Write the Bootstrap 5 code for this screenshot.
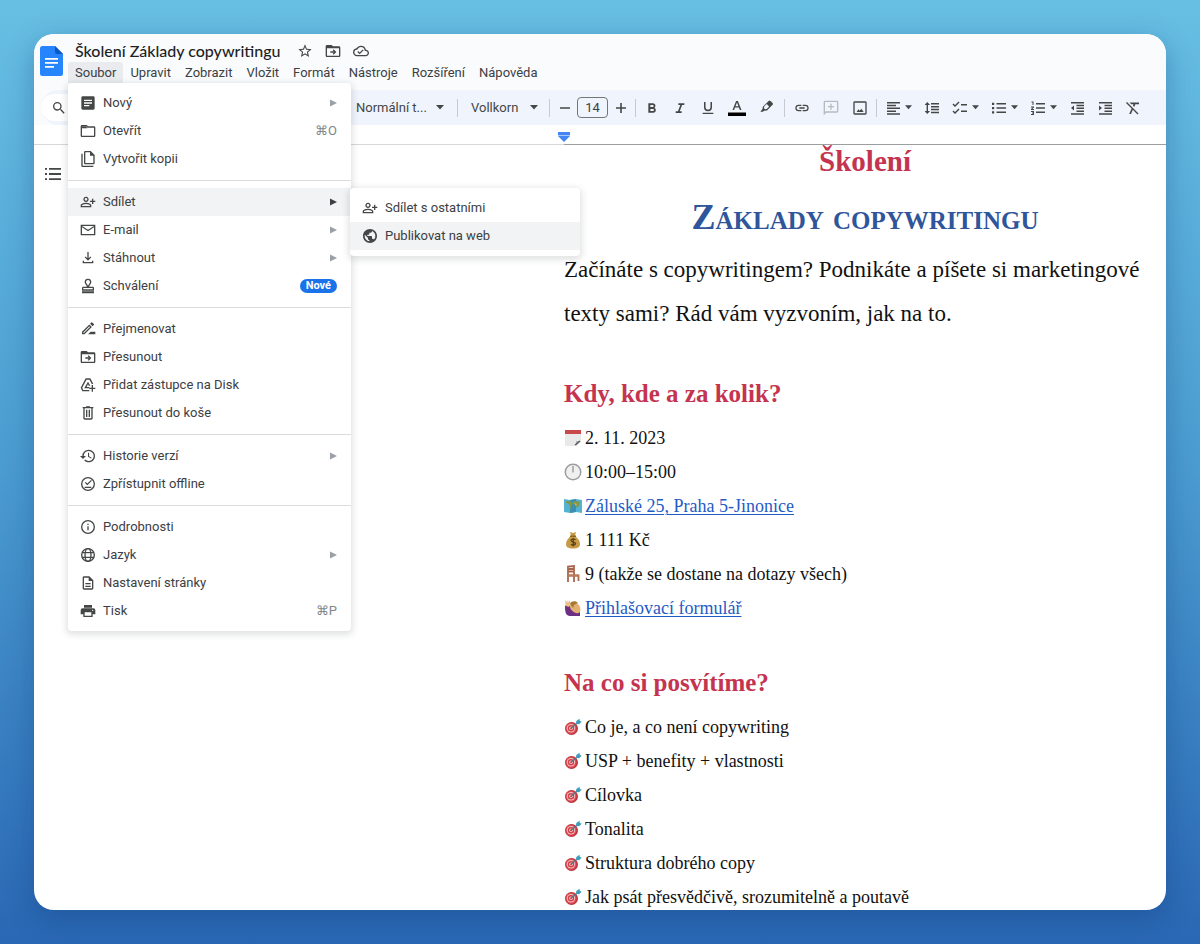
<!DOCTYPE html>
<html lang="cs">
<head>
<meta charset="utf-8">
<meta name="viewport" content="width=device-width, initial-scale=1">
<title>Školení Základy copywritingu</title>
<link rel="stylesheet" href="https://cdn.jsdelivr.net/npm/bootstrap@5.3.0/dist/css/bootstrap.min.css">
<style>
  body { font-family: Roboto, "Liberation Sans", sans-serif; font-size: 13px; color: #3c4043; background: linear-gradient(180deg, #67bfe3 0%, #4a9bd0 50%, #2a67b4 100%); }
  .stage { padding: 34px; }
  .app-window { background: #fff; border-radius: 20px; box-shadow: 0 8px 28px rgba(10, 50, 110, .32); }
  .app-head { background: #f9fbfd; padding: 6px 6px 0 6px; height: 49px; }
  .doc-logo { width: 24px; height: 32px; margin-top: 5px; }
  .doc-title { font-family: Lato, Roboto, sans-serif; font-size: 16px; line-height: 22px; color: #1f1f1f; margin: 0 0 0 7px; }
  .title-row { gap: 12px; }
  .menu-btn { font-size: 13px; line-height: 21px; padding: 0 7px; border: 0; background: none; color: #3c4043; }
  .menu-btn.show { background: #e9ebee; border-radius: 3px 3px 0 0; }
  svg { display: block; fill: #444746; flex: none; }
  .ic { width: 16px; height: 16px; }

  .file-menu, .sub-menu { --bs-dropdown-item-padding-y: 0; border: 0; border-radius: 4px; padding: 6px 0; font-size: 13px; box-shadow: 0 2px 6px 2px rgba(60, 64, 67, .15); }
  .file-menu { width: 283px; top: 100%; left: 0; }
  .file-menu .dropdown-item { height: 28px; line-height: 28px; padding: 0 14px 0 12px; color: #3c4043; gap: 7px; }
  .file-menu .dropdown-item.hot { background: #f1f3f4; }
  .file-menu .dropdown-divider { margin: 7px 0; border-color: #dadce0; opacity: 1; }
  .sub-menu { width: 230px; top: 0; left: 282px; }
  .key { color: #80868b; }
  .arr { width: 7px; height: 8px; fill: #9aa0a6; }
  .hot .arr { fill: #3c4043; }
  .new-pill { font-size: 11px; line-height: 14px; padding: 0 6px; background: #1a73e8; }

  .tool-wrap { background: #f9fbfd; padding: 7px 0 0 7px; }
  .toolbar { background: #f0f4fc; height: 35px; border-radius: 18px 0 0 18px; }
  .search-pill { width: 311px; height: 27px; padding-left: 10px; border: 0; border-radius: 14px 0 0 14px; background: linear-gradient(90deg, #fff 40px, #f0f4fc 40px); }
  .tb { border: 0; background: none; width: 28px; height: 28px; padding: 0; display: flex; align-items: center; justify-content: center; color: #444746; flex: none; font-size: 13px; }
  .tb-29 { width: 29px; }
  .tb-30 { width: 30px; }
  .tb-25 { width: 25px; }
  .tb-split { width: 39px; gap: 4px; }
  .tb-style { width: 103px; justify-content: start; padding-left: 4px; }
  .tb-font { width: 87px; justify-content: start; padding-left: 11px; }
  .tb-style span { width: 80px; text-align: left; }
  .tb-font span { width: 59px; text-align: left; }
  .caret { width: 8px; height: 5px; }
  .tb-split .caret { width: 7px; }
  .muted-ic { fill: #b8bbbe; }
  .vr-line { width: 1px; height: 18px; margin: 0 2px; background: #c7cbd1; flex: none; }
  .size-box { width: 31px; height: 21px; border: 1px solid #747775; border-radius: 4px; background: none; text-align: center; font-size: 13px; padding: 0; color: #3c4043; }

  .ruler { height: 20px; display: flex; }
  .side-part { flex: 0 1 530px; }
  .page-part { flex: 1 1 0; min-width: 0; }
  .ruler .side-part { border-bottom: 1px solid #d5d7da; }
  .ruler .page-part { border-bottom: 1px solid #9c9fa2; }
  .indent-mark { width: 12px; height: 10px; margin: 7px 0 0 -6px; }
  .outline-btn { border: 0; background: none; padding: 0; margin: 21px 0 0 10px; }

  .paper { font-family: "Liberation Serif", serif; color: #111; }
  .paper h1, .paper h2 { color: #c5344f; font-weight: 700; margin: 0; }
  .paper h1 { font-size: 29px; line-height: 32px; }
  .paper .caps { color: #2f559a; font-size: 36px; line-height: 44px; margin-top: 18px; font-variant: small-caps; font-weight: 700; }
  .paper .intro { font-size: 23px; line-height: 44px; margin: 9px 0 0; }
  .paper h2 { font-size: 25px; line-height: 36px; margin: 40px 0 9px; }
  .paper li { font-size: 18px; line-height: 34px; height: 34px; gap: 3px; display: flex; align-items: center; white-space: nowrap; }
  .paper a { color: #1f5bc4; text-decoration-thickness: 1px; text-underline-offset: 2px; }
  .emo { width: 18px; height: 18px; }
</style>
</head>
<body class="vh-100 overflow-hidden">
<svg width="0" height="0" class="position-absolute" aria-hidden="true">
  <symbol id="arr" viewBox="0 0 7 8"><path d="M0 .5 7 4 0 7.500z"/></symbol>
  <symbol id="caret" viewBox="0 0 8 5"><path d="M0 0h8L4 4.500z"/></symbol>
  <symbol id="personadd" viewBox="0 0 24 24"><path d="M9 12c2.200 0 4-1.800 4-4s-1.800-4-4-4-4 1.800-4 4 1.800 4 4 4zm0-6c1.100 0 2 .9 2 2s-.9 2-2 2-2-.9-2-2 .9-2 2-2zm0 7c-2.700 0-8 1.300-8 4v3h16v-3c0-2.700-5.300-4-8-4zm6 5H3v-1c0-.7 3-2 6-2s6 1.300 6 2v1zm5-8V7h-2v3h-3v2h3v3h2v-3h3v-2z"/></symbol>
  <symbol id="foldermove" viewBox="0 0 24 24"><path d="M21 5h-9l-2-2H3c-1.100 0-2 .9-2 2v14c0 1.100.9 2 2 2h18c1.100 0 2-.9 2-2V7c0-1.100-.9-2-2-2zm0 14H3V8h18v11zm-8-1.500 4-4-4-4-1.400 1.400 1.600 1.600H8v2h5.200l-1.600 1.600z"/></symbol>
  <symbol id="target" viewBox="0 0 18 18"><circle cx="7.500" cy="10.500" r="6.500" fill="#b9323c"/><circle cx="7" cy="10.300" r="5.600" fill="#dc4a52"/><circle cx="7" cy="10.300" r="4.200" fill="#f0c3c2"/><circle cx="7" cy="10.300" r="3.200" fill="#d2414b"/><circle cx="7" cy="10.300" r="1.800" fill="#f3d0cf"/><circle cx="7" cy="10.300" r=".9" fill="#c4303b"/><path d="m7 10.300 7-6" stroke="#58707c" stroke-width="1.200"/><path d="m12 6 .3-3L15.500.8l.3 2.200 2 .7L15 6.300z" fill="#3e9cb8"/></symbol>
</svg>

<div class="stage d-flex flex-column vh-100">
<main class="app-window d-flex flex-column flex-grow-1 overflow-hidden">
  <header class="app-head d-flex">
    <svg class="doc-logo" viewBox="0 0 24 32"><path fill="#2684fc" d="M2.500 1H15l8 8v19.500a2.500 2.500 0 0 1-2.500 2.500h-18A2.500 2.500 0 0 1 0 28.500v-25A2.500 2.500 0 0 1 2.500 1z"/><path fill="#0b57c4" d="M15 1l8 8h-5.500A2.500 2.500 0 0 1 15 6.500z"/><path fill="#fff" d="M5 13h13v1.800H5zm0 4h13v1.800H5zm0 4h9v1.800H5z"/></svg>
    <div class="ms-1">
      <div class="title-row d-flex align-items-center">
        <h1 class="doc-title">Školení Základy copywritingu</h1>
        <svg class="ic ms-1" viewBox="0 0 24 24"><path d="m22 9.240-7.190-.62L12 2 9.190 8.630 2 9.240l5.460 4.730L5.820 21 12 17.270 18.180 21l-1.630-7.030L22 9.240zM12 15.400l-3.760 2.270 1-4.280-3.320-2.880 4.380-.38L12 6.100l1.710 4.040 4.380.38-3.320 2.880 1 4.280L12 15.400z"/></svg>
        <svg class="ic" viewBox="0 0 24 24"><use href="#foldermove"/></svg>
        <svg class="ic" viewBox="0 0 24 24"><path d="M19.350 10.040A7.490 7.490 0 0 0 12 4C9.110 4 6.600 5.640 5.350 8.040A5.990 5.990 0 0 0 0 14c0 3.310 2.690 6 6 6h13c2.760 0 5-2.240 5-5 0-2.640-2.050-4.780-4.650-4.960zM19 18H6c-2.210 0-4-1.790-4-4 0-2.050 1.530-3.760 3.560-3.970l1.070-.11.5-.95A5.470 5.470 0 0 1 12 6c2.620 0 4.880 1.860 5.390 4.430l.3 1.500 1.530.11A2.980 2.980 0 0 1 22 15c0 1.650-1.350 3-3 3zm-9-3.820-2.090-2.090L6.500 13.500 10 17l6.010-6.010-1.410-1.410z"/></svg>
      </div>
      <nav class="d-flex text-nowrap">
        <div class="dropdown">
          <button class="menu-btn show" type="button" aria-expanded="true">Soubor</button>
          <ul class="dropdown-menu file-menu show m-0">
            <li><a href="#" class="dropdown-item d-flex align-items-center"><svg class="ic" viewBox="0 0 24 24"><path fill-rule="evenodd" d="M4 2h16a2 2 0 0 1 2 2v16a2 2 0 0 1-2 2H4a2 2 0 0 1-2-2V4a2 2 0 0 1 2-2zm2 5v2h12V7zm0 4v2h12v-2zm0 4v2h8v-2z"/></svg>Nový<svg class="arr ms-auto"><use href="#arr"/></svg></a></li>
            <li><a href="#" class="dropdown-item d-flex align-items-center"><svg class="ic" viewBox="0 0 24 24"><path d="M9.200 5l2 2H21v12H3V5h6.200M10 3H3c-1.100 0-2 .9-2 2v14c0 1.100.9 2 2 2h18c1.100 0 2-.9 2-2V7c0-1.100-.9-2-2-2h-9z"/><path d="M3 5h6l2 3H3z"/></svg>Otevřít<span class="key ms-auto">⌘O</span></a></li>
            <li><a href="#" class="dropdown-item d-flex align-items-center"><svg class="ic" viewBox="0 0 24 24"><path d="M16 0H8C6.900 0 6 .9 6 2v16c0 1.100.9 2 2 2h12c1.100 0 2-.9 2-2V6zm4 18H8V2h7v5h5v11zM4 4v18h16v2H4c-1.100 0-2-.9-2-2V4z"/></svg>Vytvořit kopii</a></li>
            <li><hr class="dropdown-divider"></li>
            <li class="position-relative">
              <a href="#" class="dropdown-item hot d-flex align-items-center"><svg class="ic"><use href="#personadd"/></svg>Sdílet<svg class="arr ms-auto"><use href="#arr"/></svg></a>
              <ul class="dropdown-menu sub-menu show m-0">
                <li><a href="#" class="dropdown-item d-flex align-items-center"><svg class="ic"><use href="#personadd"/></svg>Sdílet s ostatními</a></li>
                <li><a href="#" class="dropdown-item hot d-flex align-items-center"><svg class="ic" viewBox="0 0 24 24"><path d="M12 1.500C6.200 1.500 1.500 6.200 1.500 12S6.200 22.500 12 22.500 22.500 17.800 22.500 12 17.800 1.500 12 1.500zm-1 18.430c-3.950-.49-7-3.850-7-7.930 0-.62.08-1.210.21-1.790L9 15v1c0 1.100.9 2 2 2v1.930zm6.900-2.540c-.26-.81-1-1.390-1.900-1.390h-1v-3c0-.55-.45-1-1-1H8v-2h2c.55 0 1-.45 1-1V7h2c1.100 0 2-.9 2-2v-.41c2.930 1.190 5 4.060 5 7.410 0 2.080-.8 3.970-2.100 5.390z"/></svg>Publikovat na web</a></li>
              </ul>
            </li>
            <li><a href="#" class="dropdown-item d-flex align-items-center"><svg class="ic" viewBox="0 0 24 24"><path d="M1 4v16h22V4H1zm20 14H3V8l9 6 9-6v10zm-9-6.500L3 6h18l-9 5.500z"/></svg>E-mail<svg class="arr ms-auto"><use href="#arr"/></svg></a></li>
            <li><a href="#" class="dropdown-item d-flex align-items-center"><svg class="ic" viewBox="0 0 24 24"><path d="m17 11-1.400-1.400-2.600 2.600V3h-2v9.200L8.400 9.600 7 11l5 5zM4 16v4h16v-4h-2v2H6v-2z"/></svg>Stáhnout<svg class="arr ms-auto"><use href="#arr"/></svg></a></li>
            <li><a href="#" class="dropdown-item d-flex align-items-center"><svg class="ic" viewBox="0 0 24 24"><path fill-rule="evenodd" d="M12 1a5 5 0 0 1 5 5c0 2-1.300 3.500-3 6v1h5a2 2 0 0 1 2 2v4H3v-4a2 2 0 0 1 2-2h5v-1C8.300 9.500 7 8 7 6a5 5 0 0 1 5-5zm0 2a3 3 0 0 0-3 3c0 1.500 1.500 3 3 5.500 1.500-2.500 3-4 3-5.500a3 3 0 0 0-3-3zM5 15v2h14v-2zM3 20h18v3H3z"/></svg>Schválení<span class="badge rounded-pill new-pill ms-auto">Nové</span></a></li>
            <li><hr class="dropdown-divider"></li>
            <li><a href="#" class="dropdown-item d-flex align-items-center"><svg class="ic" viewBox="0 0 24 24"><path d="M12 20h11v-4h-7zM14.060 8.020l.92.92L5.920 18H5v-.92l9.060-9.060M17.660 2c-.25 0-.51.1-.7.29l-1.830 1.830 3.750 3.750 1.830-1.830a1 1 0 0 0 0-1.410l-2.340-2.340a.98.98 0 0 0-.71-.29zm-3.600 3.190L3 16.250V20h3.750L17.810 8.940l-3.750-3.750z"/></svg>Přejmenovat</a></li>
            <li><a href="#" class="dropdown-item d-flex align-items-center"><svg class="ic"><use href="#foldermove"/></svg>Přesunout</a></li>
            <li><a href="#" class="dropdown-item d-flex align-items-center"><svg class="ic" viewBox="0 0 24 24"><path d="M8.500 2h7L20 10.500h-2.300L14.300 4H9.700L3.300 16l1.600 3.500H14v2H3.600L1 16z"/><path d="m12 7 3.500 6h-2.300L12 11l-2.300 4H14v2H6.300zM17.500 12h2v4h3.500v2h-3.500v4h-2v-4H14v-2h3.500z"/></svg>Přidat zástupce na Disk</a></li>
            <li><a href="#" class="dropdown-item d-flex align-items-center"><svg class="ic" viewBox="0 0 24 24"><path d="M15 3V2H9v1H4v2h1v15c0 1.100.9 2 2 2h10c1.100 0 2-.9 2-2V5h1V3h-5zm2 17H7V5h10v15zM9 7h2v11H9zm4 0h2v11h-2z"/></svg>Přesunout do koše</a></li>
            <li><hr class="dropdown-divider"></li>
            <li><a href="#" class="dropdown-item d-flex align-items-center"><svg class="ic" viewBox="0 0 24 24"><path d="M13 2.500A9.500 9.500 0 0 0 3.500 12H0l4.500 4.500L9 12H5.500a7.500 7.500 0 1 1 2.200 5.300l-1.400 1.400A9.500 9.500 0 1 0 13 2.500zM12 7v6l4.700 2.800.8-1.300-3.900-2.300V7z"/></svg>Historie verzí<svg class="arr ms-auto"><use href="#arr"/></svg></a></li>
            <li><a href="#" class="dropdown-item d-flex align-items-center"><svg class="ic" viewBox="0 0 24 24"><path fill-rule="evenodd" d="M12 1.500a10.500 10.500 0 1 1 0 21 10.500 10.500 0 0 1 0-21zm0 2a8.500 8.500 0 1 0 0 17 8.500 8.500 0 0 0 0-17zM16.500 6l1.300 1.300-6.800 6.700L7.200 10.200l1.300-1.300 2.500 2.500zM7 16h10v2H7z"/></svg>Zpřístupnit offline</a></li>
            <li><hr class="dropdown-divider"></li>
            <li><a href="#" class="dropdown-item d-flex align-items-center"><svg class="ic" viewBox="0 0 24 24"><path fill-rule="evenodd" d="M12 1.500a10.500 10.500 0 1 1 0 21 10.500 10.500 0 0 1 0-21zm0 2a8.500 8.500 0 1 0 0 17 8.500 8.500 0 0 0 0-17zM11 7h2v2h-2zm0 4h2v6h-2z"/></svg>Podrobnosti</a></li>
            <li><a href="#" class="dropdown-item d-flex align-items-center"><svg class="ic" viewBox="0 0 24 24"><g fill="none" stroke="#444746" stroke-width="2"><circle cx="12" cy="12" r="9.500"/><ellipse cx="12" cy="12" rx="4.500" ry="9.500"/><path d="M3 8.500h18M3 15.500h18"/></g></svg>Jazyk<svg class="arr ms-auto"><use href="#arr"/></svg></a></li>
            <li><a href="#" class="dropdown-item d-flex align-items-center"><svg class="ic" viewBox="0 0 24 24"><path d="M8 16h8v2H8zm0-4h8v2H8zm6-10H6c-1.100 0-2 .9-2 2v16c0 1.100.9 2 2 2h12c1.100 0 2-.9 2-2V8l-6-6zm4 18H6V4h7v5h5v11z"/></svg>Nastavení stránky</a></li>
            <li><a href="#" class="dropdown-item d-flex align-items-center"><svg class="ic" viewBox="0 0 24 24"><path fill-rule="evenodd" d="M18 3H6v4h12zM20 8H4a3 3 0 0 0-3 3v6h4v4h14v-4h4v-6a3 3 0 0 0-3-3zm-3 11H7v-5h10zm2-7a1 1 0 1 1 0-2 1 1 0 0 1 0 2z"/></svg>Tisk<span class="key ms-auto">⌘P</span></a></li>
          </ul>
        </div>
        <button class="menu-btn" type="button">Upravit</button>
        <button class="menu-btn" type="button">Zobrazit</button>
        <button class="menu-btn" type="button">Vložit</button>
        <button class="menu-btn" type="button">Formát</button>
        <button class="menu-btn" type="button">Nástroje</button>
        <button class="menu-btn" type="button">Rozšíření</button>
        <button class="menu-btn" type="button">Nápověda</button>
      </nav>
    </div>
  </header>

  <div class="tool-wrap">
    <div class="toolbar d-flex align-items-center text-nowrap" role="toolbar">
      <button class="search-pill flex-shrink-0" type="button" aria-label="Hledat"><svg class="ic" viewBox="0 0 24 24"><path d="M15.500 14h-.79l-.28-.27A6.470 6.470 0 0 0 16 9.500 6.500 6.500 0 1 0 9.500 16c1.610 0 3.090-.59 4.230-1.570l.27.28v.79l5 4.990L20.490 19l-4.990-5zm-6 0a4.500 4.500 0 1 1 0-9 4.500 4.500 0 0 1 0 9z"/></svg></button>
      <button class="tb tb-style" type="button"><span>Normální t...</span><svg class="caret"><use href="#caret"/></svg></button>
      <i class="vr-line"></i>
      <button class="tb tb-font" type="button"><span>Vollkorn</span><svg class="caret"><use href="#caret"/></svg></button>
      <i class="vr-line"></i>
      <button class="tb tb-25" type="button" aria-label="Zmenšit"><svg class="ic" viewBox="0 0 16 16"><path d="M3 7.200h10v1.600H3z"/></svg></button>
      <input class="size-box flex-shrink-0" type="text" value="14" aria-label="Velikost písma">
      <button class="tb tb-25" type="button" aria-label="Zvětšit"><svg class="ic" viewBox="0 0 16 16"><path d="M3 7.200h4.200V3h1.600v4.200H13v1.600H8.800V13H7.200V8.800H3z"/></svg></button>
      <i class="vr-line"></i>
      <button class="tb" type="button" aria-label="Tučné"><svg class="ic" viewBox="0 0 24 24"><path d="M15.600 11.800c1-.7 1.600-1.800 1.600-2.800 0-2.300-1.700-4-4-4H6.500v14H14c2.100 0 3.700-1.700 3.700-3.800 0-1.500-.8-2.800-2.100-3.400zM9.500 7.500H13a1.500 1.500 0 0 1 0 3H9.500zm4 9h-4v-3h4a1.500 1.500 0 0 1 0 3z"/></svg></button>
      <button class="tb" type="button" aria-label="Kurzíva"><svg class="ic" viewBox="0 0 24 24"><path d="M9.500 5v2.500h3l-3.600 9.500H5.500v2.500h9V17h-2.900l3.600-9.500h3.300V5z"/></svg></button>
      <button class="tb" type="button" aria-label="Podtržené"><svg class="ic" viewBox="0 0 24 24"><path d="M12 17a6 6 0 0 0 6-6V3h-2.300v8a3.700 3.700 0 0 1-7.400 0V3H6v8a6 6 0 0 0 6 6zm-8 2v2h16v-2z"/></svg></button>
      <button class="tb tb-30" type="button" aria-label="Barva textu"><svg width="20" height="20" viewBox="0 0 20 20"><path d="M9.100 3h1.800l3.600 9h-1.700l-.9-2.400H8L7.100 12H5.500zm-.6 5.200h2.900L10 4.500z"/><path fill="#000" d="M1 14.500h18V18H1z"/></svg></button>
      <button class="tb tb-30" type="button" aria-label="Barva zvýraznění"><svg class="ic" viewBox="0 0 24 24"><path fill-rule="evenodd" d="M14.500 1.500a2 2 0 0 1 2.800 0l3 3a2 2 0 0 1 0 2.800L12 15.600l-4.500.6L6 17.500H2l3.200-4 .6-3.500zM8 9.500l-.6 2.900 1.700 1.600 2.500-.6 3.600-3.600L11.600 6z"/></svg></button>
      <i class="vr-line"></i>
      <button class="tb tb-29" type="button" aria-label="Odkaz"><svg class="ic" viewBox="0 0 24 24"><path d="M3.900 12A3.100 3.100 0 0 1 7 8.900h4V7H7a5 5 0 0 0 0 10h4v-1.900H7A3.100 3.100 0 0 1 3.900 12zM8 13h8v-2H8zm9-6h-4v1.900h4a3.100 3.100 0 0 1 0 6.200h-4V17h4a5 5 0 0 0 0-10z"/></svg></button>
      <button class="tb tb-29" type="button" aria-label="Komentář"><svg class="ic muted-ic" viewBox="0 0 24 24"><path fill-rule="evenodd" d="M3 1h18a2 2 0 0 1 2 2v14a2 2 0 0 1-2 2H5l-4 4V3a2 2 0 0 1 2-2zm0 2v15l1-1h17V3zm8 2.500h2V9h3.500v2H13v3.500h-2V11H7.500V9H11z"/></svg></button>
      <button class="tb tb-29" type="button" aria-label="Obrázek"><svg class="ic" viewBox="0 0 24 24"><path d="M20 4v16H4V4h16m0-2H4a2 2 0 0 0-2 2v16c0 1.100.9 2 2 2h16a2 2 0 0 0 2-2V4a2 2 0 0 0-2-2zm-6 11-2.500 3L9.500 14 7 18h10.500z"/></svg></button>
      <i class="vr-line"></i>
      <button class="tb tb-split" type="button" aria-label="Zarovnání"><svg class="ic" viewBox="0 0 16 16"><path d="M2 2h13v1.500H2zm0 2.800h9v1.500H2zm0 2.800h13v1.500H2zm0 2.800h9v1.500H2zm0 2.800h13v1.500H2z"/></svg><svg class="caret"><use href="#caret"/></svg></button>
      <button class="tb" type="button" aria-label="Řádkování"><svg class="ic" viewBox="0 0 16 16"><path d="M7 3h8v1.500H7zm0 3h8v1.500H7zm0 2.800h8v1.500H7zm0 2.900h8v1.500H7zM3.300 2 6 5H4v6h2l-2.700 3L.6 11h2V5h-2z"/></svg></button>
      <button class="tb tb-split" type="button" aria-label="Kontrolní seznam"><svg class="ic" viewBox="0 0 16 16"><path d="M9 4h6v1.500H9zm0 6.500h6V12H9zM3 7 .5 4.500l1-1L3 5l3.500-3.500 1 1zm0 7L.5 11.500l1-1L3 12l3.500-3.500 1 1z"/></svg><svg class="caret"><use href="#caret"/></svg></button>
      <button class="tb tb-split" type="button" aria-label="Seznam s odrážkami"><svg class="ic" viewBox="0 0 16 16"><path d="M5.500 3H15v1.500H5.500zm0 4.200H15v1.500H5.500zm0 4.300H15V13H5.500zM1 2.700h2.200v2.200H1zM1 7h2.200v2.200H1zm0 4.200h2.200v2.200H1z"/></svg><svg class="caret"><use href="#caret"/></svg></button>
      <button class="tb tb-split" type="button" aria-label="Číslovaný seznam"><svg class="ic" viewBox="0 0 16 16"><path d="M6 3h9v1.500H6zm0 4.200h9v1.500H6zm0 4.300h9V13H6zM1.500 1.500h2V5h-1V2.500h-1zM1 6.500h3v1L2.300 9H4v1H1V9l1.600-1.600H1zM1 11h3v4H1v-1h2v-.6H2v-.9h1V12H1z"/></svg><svg class="caret"><use href="#caret"/></svg></button>
      <button class="tb" type="button" aria-label="Zmenšit odsazení"><svg class="ic" viewBox="0 0 16 16"><path d="M2 2h13v1.500H2zm5.500 2.800H15v1.500H7.500zm0 2.800H15v1.500H7.500zm0 2.800H15v1.500H7.500zM2 13.200h13v1.500H2zM5 5.500v5L2 8z"/></svg></button>
      <button class="tb" type="button" aria-label="Zvětšit odsazení"><svg class="ic" viewBox="0 0 16 16"><path d="M2 2h13v1.500H2zm5.500 2.800H15v1.500H7.500zm0 2.800H15v1.500H7.500zm0 2.800H15v1.500H7.500zM2 13.200h13v1.500H2zM2 5.500v5L5 8z"/></svg></button>
      <button class="tb" type="button" aria-label="Vymazat formátování"><svg class="ic" viewBox="0 0 16 16"><path d="M4.500 2.500H14v1.800h-3.600L9.200 7 7.900 5.700l.6-1.400H6.300zM2 2l11.500 11.500-1 1-4.700-4.800L6 14H4.200l2.400-5.500L1 3z"/></svg></button>
    </div>
  </div>

  <div class="ruler flex-shrink-0">
    <div class="side-part"></div>
    <div class="page-part"><svg class="indent-mark" viewBox="0 0 12 10"><path fill="#4285f4" d="M0 0h12v4L6 10 0 4z"/><path fill="#a9c7fa" d="M0 3h12v1H0z"/></svg></div>
  </div>

  <div class="d-flex flex-grow-1 overflow-hidden">
    <div class="side-part">
      <button class="outline-btn" type="button" aria-label="Osnova"><svg width="18" height="16" viewBox="0 0 18 16"><path d="M5 2h12v1.800H5zm0 5.100h12v1.800H5zm0 5.100h12V14H5zM1 2h2v1.800H1zm0 5.100h2v1.800H1zm0 5.100h2V14H1z"/></svg></button>
    </div>
    <article class="page-part paper">
      <h1 class="text-center">Školení</h1>
      <p class="caps text-center mb-0">Základy copywritingu</p>
      <p class="intro">Začínáte s copywritingem? Podnikáte a píšete si marketingové texty sami? Rád vám vyzvoním, jak na to.</p>
      <h2>Kdy, kde a za kolik?</h2>
      <ul class="list-unstyled m-0">
        <li><svg class="emo" viewBox="0 0 18 18"><path fill="#e9e9ea" d="M1 1h16v11l-5 5H1z"/><path fill="#c8474b" d="M1 1h16v4H1z"/><path fill="#b5b8bb" d="M12 17v-5h5z"/><path d="m11 16 5-4" stroke="#555" stroke-width="1.200"/></svg>2. 11. 2023</li>
        <li><svg class="emo" viewBox="0 0 18 18"><circle cx="9" cy="9" r="8.500" fill="#9b9ea1"/><circle cx="9" cy="9" r="7" fill="#f0f0f0"/><path d="M9 3v6.500" stroke="#777" stroke-width="1"/></svg>10:00–15:00</li>
        <li><svg class="emo" viewBox="0 0 18 18"><path fill="#55b2d2" d="m0 2 6 1 6-1 6 1v13l-6-1-6 1-6-1z"/><path fill="#3c8fae" d="m6 3 6-1v13l-6 1z"/><path fill="#7c9a4a" d="m2 4 5 .5 2 2-2 2 1 4-2-2-1-3-3-2zM10 4l6 .5-1 4-2 3-1-3-3-2z"/><path fill="#d8b45b" d="m10 6 3 1-1 2z"/></svg><a href="#">Záluské 25, Praha 5-Jinonice</a></li>
        <li><svg class="emo" viewBox="0 0 18 18"><path fill="#c79a45" d="M6 1l3 1 3-1-1 4c3 2 5 5 5 8s-2 4.500-7 4.500S2 16 2 13s2-6 5-8z"/><path fill="#8c6424" d="M6 4.500h6V6H6z"/><path d="M11.500 8.800c-1.500-1.200-4.500-.8-4.500.8 0 2 4.500 1 4.500 3 0 1.600-3 2-4.500.7M9.200 7v8.500" fill="none" stroke="#5d4218" stroke-width="1.300"/></svg>1 111 Kč</li>
        <li><svg class="emo" viewBox="0 0 18 18"><path fill="none" stroke="#a9664c" stroke-width="1.800" d="M4 17V1.500L10 1v9M4 4h6M4 6.500h6M4 10.500h10.500V16M10 11v6"/><path fill="#bd7b5e" d="M4 9.500h10l1 2H4z"/></svg>9 (takže se dostane na dotazy všech)</li>
        <li><svg class="emo" viewBox="0 0 18 18"><path fill="#6d2f83" d="M1 8c0-2 2-3 4-2l5 7 6-1v5H6c-4 0-5-4-5-9z"/><path fill="#e2b273" d="M7 5c3-2 8-1 9 3s0 7-4 6-8-6-5-9z"/><path fill="#a87733" d="M6 5c0-3 6-4 8-1l-4 2-1 3z"/><path fill="#edbf86" d="m2 1 1 3 1-3.500.5 3L6 1v4l-1 3-3-1-1-4z"/></svg><a href="#">Přihlašovací formulář</a></li>
      </ul>
      <h2>Na co si posvítíme?</h2>
      <ul class="list-unstyled m-0">
        <li><svg class="emo"><use href="#target"/></svg>Co je, a co není copywriting</li>
        <li><svg class="emo"><use href="#target"/></svg>USP + benefity + vlastnosti</li>
        <li><svg class="emo"><use href="#target"/></svg>Cílovka</li>
        <li><svg class="emo"><use href="#target"/></svg>Tonalita</li>
        <li><svg class="emo"><use href="#target"/></svg>Struktura dobrého copy</li>
        <li><svg class="emo"><use href="#target"/></svg>Jak psát přesvědčivě, srozumitelně a poutavě</li>
      </ul>
    </article>
  </div>
</main>
</div>
<script src="https://cdn.jsdelivr.net/npm/bootstrap@5.3.0/dist/js/bootstrap.bundle.min.js"></script>
</body>
</html>
